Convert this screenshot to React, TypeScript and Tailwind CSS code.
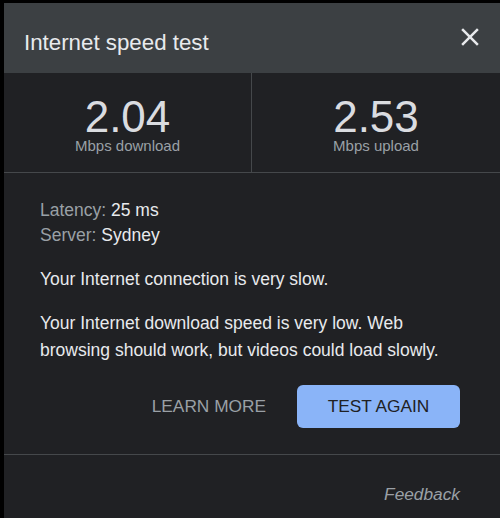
export default function App() {
  return (
    <div className="h-[518px] w-full overflow-hidden bg-black pl-[4px] pt-[3px] font-['Liberation_Sans',Arial,sans-serif]">
      <div className="flex h-full flex-col bg-[#202124]">
        {/* Header */}
        <div className="flex h-[70px] shrink-0 items-start justify-between bg-[#3c4043] pl-[20px] pr-[15px]">
          <h1 className="pt-[26px] text-[22.3px] leading-[28px] text-[#e8eaed]">Internet speed test</h1>
          <button className="mt-[19px] text-[#e8eaed]" aria-label="Close">
            <svg width="30" height="30" viewBox="0 0 24 24" fill="currentColor">
              <path d="M19 6.41 17.59 5 12 10.59 6.41 5 5 6.41 10.59 12 5 17.59 6.41 19 12 13.41 17.59 19 19 17.59 13.41 12z" />
            </svg>
          </button>
        </div>

        {/* Results */}
        <div className="grid h-[100px] shrink-0 grid-cols-2 border-b border-[#45484b]">
          <div className="flex flex-col items-center border-r border-[#45484b] pt-[22px]">
            <div className="text-[44px] leading-[44px] text-[#dadce0]">2.04</div>
            <div className="text-[15px] leading-[14px] text-[#9aa0a6]">Mbps download</div>
          </div>
          <div className="flex flex-col items-center pt-[22px]">
            <div className="text-[44px] leading-[44px] text-[#dadce0]">2.53</div>
            <div className="text-[15px] leading-[14px] text-[#9aa0a6]">Mbps upload</div>
          </div>
        </div>

        {/* Details */}
        <div className="pl-[36px] pr-[40px] pt-[25px] text-[17.5px] text-[#e8eaed]">
          <div className="leading-[25px]">
            <span className="text-[#9aa0a6]">Latency: </span>25 ms
          </div>
          <div className="leading-[25px]">
            <span className="text-[#9aa0a6]">Server: </span>Sydney
          </div>
          <p className="mt-[18px] leading-[27px]">Your Internet connection is very slow.</p>
          <p className="mt-[17px] leading-[27px]">
            Your Internet download speed is very low. Web browsing should work, but videos could load slowly.
          </p>

          <div className="mt-[21px] flex items-center justify-end gap-[31px]">
            <button className="text-[17.3px] text-[#9aa0a6]">LEARN MORE</button>
            <button className="h-[43px] w-[163px] rounded-[6px] bg-[#8ab4f8] text-[17.3px] text-[#202124]">
              TEST AGAIN
            </button>
          </div>
        </div>

        {/* Footer */}
        <div className="mt-[26px] border-t border-[#45484b] pr-[40px] pt-[28px] text-right">
          <a className="text-[17.3px] italic leading-[20px] text-[#9aa0a6]">Feedback</a>
        </div>
      </div>
    </div>
  )
}
